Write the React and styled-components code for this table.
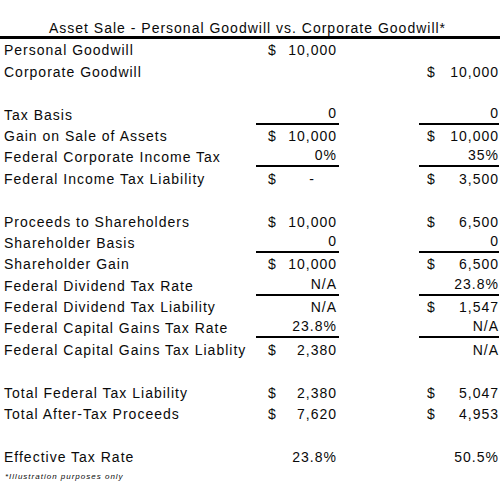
import React from "react";
import styled, { createGlobalStyle } from "styled-components";

const GlobalStyle = createGlobalStyle`
  html, body {
    margin: 0;
    padding: 0;
    background: #ffffff;
  }
  body {
    font-family: "Liberation Sans", Arial, sans-serif;
    color: #0a0a0a;
  }
`;

const Sheet = styled.div`
  width: 500px;
  height: 500px;
  display: flex;
  flex-direction: column;
  font-size: 14px;
  letter-spacing: 1px;
  line-height: 16px;
`;

const Title = styled.div`
  height: 36px;
  display: flex;
  align-items: flex-end;
  justify-content: center;
  padding-right: 5px;
  border-bottom: 3px solid #000;
`;

const Row = styled.div`
  display: grid;
  grid-template-columns: 256px 83px 80px 80px;
  height: 21.4px;
`;

const Label = styled.div`
  display: flex;
  align-items: flex-end;
  padding: 0 0 2px 4px;
  white-space: nowrap;
`;

const Cell = styled.div`
  grid-column: ${(p) => (p.$col === "a" ? 2 : 4)};
  display: flex;
  align-items: flex-end;
  justify-content: space-between;
  box-sizing: border-box;
  padding: ${(p) => (p.$col === "a" ? "0 2px 2px 12px" : "0 0 2px 8px")};
  border-bottom: ${(p) => (p.$rule ? "2px solid #000" : "none")};
  white-space: nowrap;
`;

const Right = styled.span`
  margin-left: auto;
`;

const Dash = styled.span`
  margin-right: 22px;
`;

const Footnote = styled.div`
  padding: 5px 0 0 5px;
  font-size: 8px;
  line-height: 10px;
  font-style: italic;
  letter-spacing: 1px;
`;

const rows = [
  ["Personal Goodwill", "$10,000", ""],
  ["Corporate Goodwill", "", "$10,000"],
  null,
  ["Tax Basis", "0", "0", true],
  ["Gain on Sale of Assets", "$10,000", "$10,000"],
  ["Federal Corporate Income Tax", "0%", "35%", true],
  ["Federal Income Tax Liability", "$-", "$3,500"],
  null,
  ["Proceeds to Shareholders", "$10,000", "$6,500"],
  ["Shareholder Basis", "0", "0", true],
  ["Shareholder Gain", "$10,000", "$6,500"],
  ["Federal Dividend Tax Rate", "N/A", "23.8%", true],
  ["Federal Dividend Tax Liability", "N/A", "$1,547"],
  ["Federal Capital Gains Tax Rate", "23.8%", "N/A", true],
  ["Federal Capital Gains Tax Liablity", "$2,380", "N/A"],
  null,
  ["Total Federal Tax Liability", "$2,380", "$5,047"],
  ["Total After-Tax Proceeds", "$7,620", "$4,953"],
  null,
  ["Effective Tax Rate", "23.8%", "50.5%"],
];

const Value = ({ col, text, rule }) => {
  if (!text && !rule) return null;
  if (text.startsWith("$")) {
    const amount = text.slice(1);
    return (
      <Cell $col={col} $rule={rule}>
        <span>$</span>
        {amount === "-" ? <Dash>-</Dash> : <Right>{amount}</Right>}
      </Cell>
    );
  }
  return (
    <Cell $col={col} $rule={rule}>
      <Right>{text}</Right>
    </Cell>
  );
};

export default function App() {
  return (
    <>
      <GlobalStyle />
      <Sheet>
        <Title>Asset Sale - Personal Goodwill vs. Corporate Goodwill*</Title>
        {rows.map((r, i) =>
          r ? (
            <Row key={i}>
              <Label>{r[0]}</Label>
              <Value col="a" text={r[1]} rule={r[3]} />
              <Value col="b" text={r[2]} rule={r[3]} />
            </Row>
          ) : (
            <Row key={i} />
          )
        )}
        <Footnote>*Illustration purposes only</Footnote>
      </Sheet>
    </>
  );
}
